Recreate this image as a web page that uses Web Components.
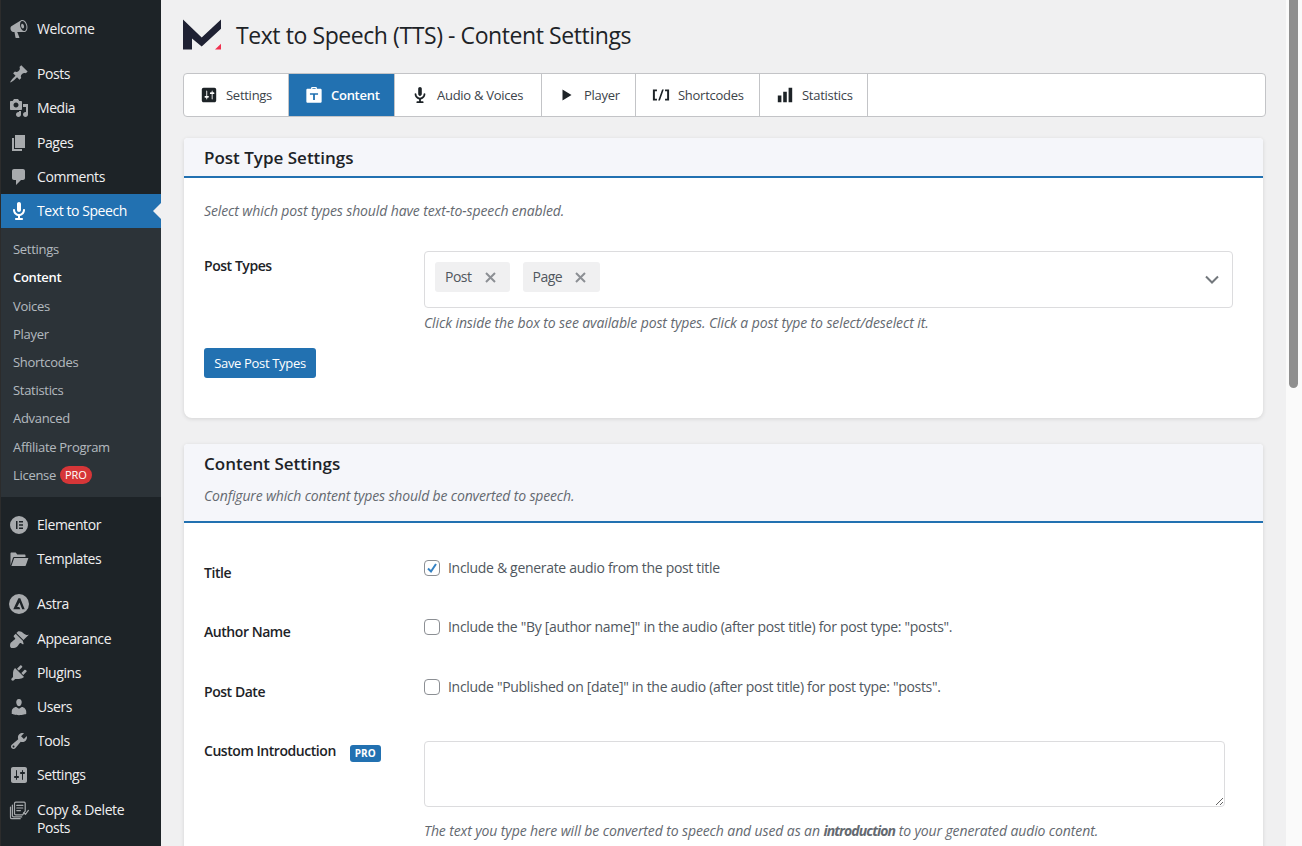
<!DOCTYPE html>
<html lang="en"><head><meta charset="utf-8"><title>Text to Speech</title>
<style>
html,body{margin:0;padding:0;height:846px;overflow:hidden;background:#f0f0f1}
body{font:13px/1.4 "Open Sans","Noto Sans",sans-serif;letter-spacing:-.3px;color:#3c434a}
</style></head><body>
<wp-app>
  <wp-sidebar slot="side">
    <wp-item icon="megaphone">Welcome</wp-item>
    <wp-sep></wp-sep>
    <wp-item icon="pin">Posts</wp-item>
    <wp-item icon="media">Media</wp-item>
    <wp-item icon="page">Pages</wp-item>
    <wp-item icon="comment">Comments</wp-item>
    <wp-item icon="mic" current>Text to Speech</wp-item>
    <wp-submenu>
      <wp-sub>Settings</wp-sub>
      <wp-sub current>Content</wp-sub>
      <wp-sub>Voices</wp-sub>
      <wp-sub>Player</wp-sub>
      <wp-sub>Shortcodes</wp-sub>
      <wp-sub>Statistics</wp-sub>
      <wp-sub>Advanced</wp-sub>
      <wp-sub>Affiliate Program</wp-sub>
      <wp-sub>License <red-pill>PRO</red-pill></wp-sub>
    </wp-submenu>
    <wp-sep></wp-sep>
    <wp-item icon="elementor">Elementor</wp-item>
    <wp-item icon="folder">Templates</wp-item>
    <wp-sep></wp-sep>
    <wp-item icon="astra">Astra</wp-item>
    <wp-item icon="brush">Appearance</wp-item>
    <wp-item icon="plug">Plugins</wp-item>
    <wp-item icon="users">Users</wp-item>
    <wp-item icon="tools">Tools</wp-item>
    <wp-item icon="sliders">Settings</wp-item>
    <wp-item icon="copy">Copy &amp; Delete Posts</wp-item>
  </wp-sidebar>

  <tts-head>Text to Speech (TTS) - Content Settings</tts-head>
  <tts-tabs>
    <tts-tab icon="sliders" w="105">Settings</tts-tab>
    <tts-tab icon="bag" w="106" active>Content</tts-tab>
    <tts-tab icon="mic" w="147">Audio &amp; Voices</tts-tab>
    <tts-tab icon="play" w="94">Player</tts-tab>
    <tts-tab icon="shortcode" w="124">Shortcodes</tts-tab>
    <tts-tab icon="bars" w="108">Statistics</tts-tab>
  </tts-tabs>

  <tts-card heading="Post Type Settings" style="height:280px;margin-top:21px">
    <tts-hint style="display:block;margin:24px 0 31px">Select which post types should have text-to-speech enabled.</tts-hint>
    <tts-row label="Post Types" labeltop="6" fieldtop="0">
      <tts-select><tts-chip>Post</tts-chip><tts-chip>Page</tts-chip></tts-select>
      <tts-hint style="display:block;margin-top:6px">Click inside the box to see available post types. Click a post type to select/deselect it.</tts-hint>
    </tts-row>
    <tts-button style="margin-top:16px">Save Post Types</tts-button>
  </tts-card>

  <tts-card heading="Content Settings" sub="Configure which content types should be converted to speech." style="margin-top:26px;height:500px">
    <tts-row label="Title" labeltop="41" fieldtop="36" h="59"><tts-check checked>Include &amp; generate audio from the post title</tts-check></tts-row>
    <tts-row label="Author Name" labeltop="41" fieldtop="36" h="60"><tts-check>Include the "By [author name]" in the audio (after post title) for post type: "posts".</tts-check></tts-row>
    <tts-row label="Post Date" labeltop="41" fieldtop="36" h="59.5"><tts-check>Include "Published on [date]" in the audio (after post title) for post type: "posts".</tts-check></tts-row>
    <tts-row label="Custom Introduction" pro labeltop="40" fieldtop="39">
      <tts-area></tts-area>
      <tts-hint style="display:block;margin-top:15px">The text you type here will be converted to speech and used as an <b style="letter-spacing:-.9px">introduction</b> to your generated audio content.</tts-hint>
    </tts-row>
  </tts-card>
</wp-app>

<script>
const ICONS={
megaphone:'<path d="M18.15 5.94c.46 1.62.38 3.22-.02 4.48-.42 1.28-1.26 2.18-2.3 2.48-.16.06-.26.06-.4.06-.06.02-.12.02-.18.02-.06.02-.14.02-.22.02H8.23l2.22 5.5c.02.14-.06.26-.14.34-.08.1-.24.16-.34.16H6.95c-.1 0-.26-.06-.34-.16-.08-.08-.16-.2-.14-.34l-1-5.5H4.25l-.02-.02c-.5.06-1.08-.18-1.54-.62s-.88-1.08-1.06-1.88c-.24-.8-.2-1.56-.02-2.2.18-.62.58-1.08 1.06-1.3l.02-.02 9-5.4c.1-.06.18-.1.24-.16.06-.04.14-.08.24-.12.16-.08.28-.12.5-.18 1.04-.3 2.24.1 3.22.98s1.76 2.24 2.22 3.86zm-2.58 5.98h-.02c.4-.1.74-.34 1.04-.7.58-.7.86-1.76.86-3.04 0-.64-.1-1.3-.28-1.98-.34-1.36-1.02-2.5-1.78-3.24s-1.68-1.1-2.46-.88c-.82.22-1.4.96-1.7 2-.32 1.04-.28 2.36.06 3.72.38 1.36 1 2.5 1.8 3.24.78.74 1.62 1.1 2.48.88zm-2.54-7.08c.22-.04.42-.02.62.04.38.16.76.48 1.02 1s.42 1.2.42 1.78c0 .3-.04.56-.12.8-.18.48-.44.84-.86.94-.34.1-.8-.06-1.14-.4s-.64-.86-.78-1.5c-.18-.62-.12-1.24.02-1.72s.48-.84.82-.94z"/>',
pin:'<path d="M10.44 3.02l1.82-1.82 6.36 6.35-1.83 1.82c-1.05-.68-2.48-.57-3.41.36l-.75.75c-.92.93-1.04 2.35-.35 3.41l-1.83 1.82-2.41-2.41-2.8 2.79c-.42.42-3.38 2.71-3.8 2.29s1.86-3.39 2.28-3.81l2.79-2.79L4.1 9.36l1.83-1.82c1.05.69 2.48.57 3.4-.36l.75-.75c.93-.92 1.05-2.35.36-3.41z"/>',
media:'<path d="M13 11V4c0-.55-.45-1-1-1h-1.67L9 1H5L3.67 3H2c-.55 0-1 .45-1 1v7c0 .55.45 1 1 1h10c.55 0 1-.45 1-1zM7 4.5c1.38 0 2.5 1.12 2.5 2.5S8.38 9.5 7 9.5 4.5 8.38 4.5 7 5.62 4.5 7 4.5zM14 6h5v10.5c0 1.38-1.12 2.5-2.5 2.5S14 17.88 14 16.5s1.12-2.5 2.5-2.5c.17 0 .34.02.5.05V9h-3V6zm-4 8.05V13h2v3.5c0 1.38-1.12 2.5-2.5 2.5S7 17.88 7 16.5 8.12 14 9.5 14c.17 0 .34.02.5.05z"/>',
page:'<path d="M6 15V2h10v13H6zm-1 1h8v2H3V5h2v11z"/>',
comment:'<path d="M5 2h9c1.1 0 2 .9 2 2v7c0 1.1-.9 2-2 2h-2l-5 5v-5H5c-1.1 0-2-.9-2-2V4c0-1.1.9-2 2-2z"/>',
mic:'<path d="M12 9V3c0-1.1-.89-2-2-2-1.12 0-2 .94-2 2v6c0 1.1.9 2 2 2 1.1 0 2-.9 2-2zm4 0c0 2.97-2.16 5.43-5 5.91V17h2c.56 0 1 .45 1 1s-.44 1-1 1H7c-.55 0-1-.45-1-1s.45-1 1-1h2v-2.09C6.17 14.43 4 11.97 4 9c0-.55.45-1 1-1 .56 0 1 .45 1 1 0 2.21 1.8 4 4 4 2.21 0 4-1.79 4-4 0-.55.45-1 1-1 .56 0 1 .45 1 1z"/>',
elementor:'<path fill-rule="evenodd" d="M10 1a9 9 0 1 0 0 18 9 9 0 0 0 0-18zM7 6h1.500v8H7V6zm3 0h4v1.500h-4V6zm0 3.250h4v1.500h-4v-1.500zm0 3.250h4V14h-4v-1.500z"/>',
folder:'<path d="M1.500 16.500V4.500c0-.6.4-1 1-1h4.200l1.600 2h7.200c.6 0 1 .4 1 1V8H5.200c-.6 0-1 .3-1.200.8L1.500 16.500z"/><path d="M5.200 9H19.400l-2.600 7.600c-.1.3-.4.4-.7.4H2.400L5.200 9z"/>',
astra:'<path fill-rule="evenodd" d="M10 0a10 10 0 1 0 0 20 10 10 0 0 0 0-20zM9.400 4.200h1.900l4.400 11h-2.500l-2.700-6.600-2.400 4.300h2.200l1 2.300H4.300L9.400 4.200z"/>',
brush:'<path d="M14.48 11.06L7.41 3.99l1.5-1.5c.5-.56 2.3-.47 3.51.32 1.21.8 1.43 1.28 2.91 2.1 1.18.64 2.45 1.26 4.45.85zm-.71.71L6.7 4.7 4.93 6.47c-.39.39-.39 1.02 0 1.41l1.06 1.06c.39.39.39 1.03 0 1.42-.6.6-1.43 1.11-2.21 1.69-.35.26-.7.53-1.01.84C1.43 13.23.91 15.24 1.1 17.2c.09.88.97 1.76 1.86 1.85 1.96.19 3.96-.33 5.29-1.66.31-.31.58-.66.84-1.01.58-.78 1.09-1.61 1.69-2.21.39-.39 1.03-.39 1.42 0L13.24 15c.39.39 1.02.39 1.41 0z"/>',
plug:'<path d="M13.11 4.36L9.87 7.6 8 5.73l3.24-3.24c.35-.34 1.05-.2 1.56.32.52.51.66 1.21.31 1.55zm-8 1.77l.91-1.12 9.01 9.01-1.19.84c-.71.71-2.63 1.16-3.82 1.16H6.14L4.9 17.26c-.59.59-1.54.59-2.12 0-.59-.58-.59-1.53 0-2.12l1.24-1.24v-3.88c0-1.13.4-3.19 1.09-3.89zm7.26 3.97l3.24-3.24c.34-.35 1.04-.21 1.55.31.52.51.66 1.21.31 1.55l-3.24 3.25z"/>',
users:'<path d="M10 9.25c-2.27 0-2.73-3.44-2.73-3.44C7 4.02 7.82 2 9.97 2c2.16 0 2.98 2.02 2.71 3.81 0 0-.41 3.44-2.68 3.44zm0 2.57L12.72 10c2.39 0 4.52 2.33 4.52 4.53v2.49s-3.65 1.13-7.24 1.13c-3.65 0-7.24-1.13-7.24-1.13v-2.49c0-2.25 1.94-4.48 4.47-4.48z"/>',
tools:'<path d="M16.68 9.77c-1.34 1.34-3.3 1.67-4.95.99l-5.41 6.52c-.99.99-2.59.99-3.58 0s-.99-2.59 0-3.57l6.52-5.42c-.68-1.65-.35-3.61.99-4.95 1.28-1.28 3.12-1.62 4.72-1.06l-2.89 2.89 2.82 2.82 2.86-2.87c.53 1.58.18 3.39-1.08 4.65zM3.81 16.21c.4.39 1.04.39 1.43 0 .4-.4.4-1.04 0-1.43-.39-.4-1.03-.4-1.43 0-.39.39-.39 1.03 0 1.43z"/>',
sliders:'<path d="M18 16V4c0-1.1-.9-2-2-2H4c-1.1 0-2 .9-2 2v12c0 1.1.9 2 2 2h12c1.1 0 2-.9 2-2zM8 11h1c.55 0 1 .45 1 1s-.45 1-1 1H8v1.5c0 .28-.22.5-.5.5s-.5-.22-.5-.5V13H6c-.55 0-1-.45-1-1s.45-1 1-1h1V5.5c0-.28.22-.5.5-.5s.5.22.5.5V11zm5-2h-1c-.55 0-1-.45-1-1s.45-1 1-1h1V5.5c0-.28.22-.5.5-.5s.5.22.5.5V7h1c.55 0 1 .45 1 1s-.45 1-1 1h-1v5.5c0 .28-.22.5-.5.5s-.5-.22-.5-.5V9z"/>',
copy:'<g fill="none" stroke="currentColor" stroke-width="1.2" stroke-linejoin="round" stroke-linecap="round"><path d="M5.5 3.5c0-.8.5-1.3 1.3-1.3h8.4c.6 0 1 .4 1 1v8l-2.6 3.7H6.8c-.8 0-1.3-.5-1.3-1.3z"/><path d="M3.4 5.2v10.4c0 .8.5 1.3 1.3 1.3h8"/><path d="M1.5 7v10.4c0 .8.5 1.3 1.3 1.3h8.4"/><path d="M7.8 5.4h6M7.8 8h6M7.8 10.6h3.6"/><path d="M14.6 12.8l1.8 1.6 3-4" /></g>',
bag:'<path fill-rule="evenodd" d="M6.800 3V2.200C6.800 1.500 7.300 1 8 1h4c.7 0 1.200.5 1.200 1.200V3h3.900c.8 0 1.400.6 1.400 1.400v12.700c0 .8-.6 1.400-1.400 1.400H2.900c-.8 0-1.400-.6-1.400-1.400V4.400C1.500 3.600 2.100 3 2.900 3h3.900zm1.400 0h3.600V2.200H8.200V3zM5.500 8v1.800h3.500v5.700h2V9.800h3.500V8h-9z"/>',
play:'<path d="M5 4l10 6-10 6z"/>',
shortcode:'<path d="M1 4h4.500v1.800H3.200v8.400h2.300V16H1zM19 4h-4.500v1.800h2.300v8.400h-2.300V16H19zM11.200 4h1.900L8.800 16H6.900z"/>',
bars:'<path d="M2 10.500h4V18H2zM8 6.500h4V18H8zM14 2h4v16h-4z"/>'
};
function def(tag,css,html,init){
  customElements.define(tag,class extends HTMLElement{
    constructor(){super();this.attachShadow({mode:'open'});}
    connectedCallback(){
      const h=typeof html==='function'?html(this):html;
      this.shadowRoot.innerHTML='<style>'+css+'</style>'+h;
      if(init)init(this);
    }
  });
}
const svg=(n,s)=>'<svg viewBox="0 0 20 20" width="'+s+'" height="'+s+'" fill="currentColor" aria-hidden="true">'+ICONS[n]+'</svg>';

def('wp-app',`
:host{display:flex;width:1302px;height:846px;overflow:hidden;background:#f0f0f1}
.main{flex:1;min-width:0;display:flex;flex-direction:column;padding:0 20px 0 22px;overflow:hidden}
.bar{flex:0 0 16px;background:#fafafa;padding-left:3px;box-sizing:border-box}
.thumb{width:9px;height:388px;background:#8f8f8f;border-radius:0 0 5px 5px}
`,`<slot name="side"></slot><div class="main"><slot></slot></div><div class="bar"><div class="thumb"></div></div>`);

def('wp-sidebar',`
:host{flex:0 0 160px;width:160px;height:846px;background:#1d2327;border-left:1px solid #2c2c2c;padding-top:12px;box-sizing:content-box;display:block;overflow:hidden;color:#f0f0f1}
`,`<slot></slot>`);
def('wp-sep',`:host{display:block;height:11px}`,``);
def('wp-item',`
:host{display:flex;position:relative;color:#f0f0f1;background:transparent;padding:8px 0;line-height:18.2px;font-size:14px;letter-spacing:-.42px}
:host([current]){background:#2271b1;color:#fff}
.ic{flex:0 0 36px;display:flex;justify-content:center;align-items:flex-start;color:#a7aaad;height:18px}
:host([current]) .ic{color:#fff}
.ic svg{display:block;margin-top:-1px}
.t{flex:1;padding-right:8px}
.arrow{position:absolute;right:0;top:50%;margin-top:-8px;border:8px solid transparent;border-right-color:#f0f0f1}
`,el=>`<span class="ic">${svg(el.getAttribute('icon'),20)}</span><span class="t"><slot></slot></span>`+(el.hasAttribute('current')?'<i class="arrow"></i>':''));
def('wp-submenu',`:host{display:block;background:#2c3338;padding:7px 0 8px}`,`<slot></slot>`);
def('wp-sub',`
:host{display:block;padding:5px 12px;line-height:18.2px;font-size:13px;color:rgba(240,246,252,.7)}
:host([current]){color:#fff;font-weight:600}
`,`<slot></slot>`);
def('red-pill',`
:host{display:inline-block;background:#d63638;color:#fff;font-size:11px;font-weight:400;line-height:17px;height:18px;padding:0 5px;border-radius:9px;margin-left:1px;vertical-align:1px;letter-spacing:-.15px}
`,`<slot></slot>`);

def('tts-head',`
:host{display:flex;align-items:center;gap:15px;height:31px;margin-top:18px;margin-bottom:24px;flex:none;color:#1d2327;font-size:23px;font-weight:400;letter-spacing:-.42px}
svg{display:block;flex:none}
h1{margin:0;font:inherit;line-height:31px;margin-top:3px}
`,`<svg width="38" height="31" viewBox="0 0 38 30" style="margin-top:2px"><path fill="#1f2133" d="M0 0L18.700 18 38 0v9.300L18.700 27 9 19V30H0z"/><path fill="#f0304f" d="M38 24.300V30h-6z"/></svg><h1><slot></slot></h1>`);

def('tts-tabs',`
:host{display:flex;flex:none;height:44px;box-sizing:border-box;background:#fff;border:1px solid #c3c4c7;border-radius:4px;overflow:hidden}
`,`<slot></slot>`);
def('tts-tab',`
:host{display:flex;align-items:center;gap:8px;box-sizing:border-box;padding-left:16px;border-right:1px solid #c3c4c7;color:#3c434a;font-size:13px;line-height:18px;letter-spacing:-.27px}
:host([active]){background:#2271b1;color:#fff;font-weight:600}
.ic{display:flex;color:#1d2327}
:host([active]) .ic{color:#fff}
svg{display:block}
`,el=>{el.style.flex='0 0 '+el.getAttribute('w')+'px';return `<span class="ic">${svg(el.getAttribute('icon'),18)}</span><span><slot></slot></span>`;});

def('tts-card',`
:host{display:block;flex:none;box-sizing:border-box;margin:0 3px 0 1px;background:#fff;border-radius:4px 4px 8px 8px;box-shadow:0 1px 4px rgba(0,0,0,.12)}
header{background:#f5f6fa;border-bottom:2px solid #2271b1;padding:8px 20px 0;box-sizing:border-box;border-radius:4px 4px 0 0}
h2{margin:0;font-size:17px;font-weight:600;line-height:23px;color:#1d2327;letter-spacing:0}
p{margin:0;font-style:italic;color:#646970;font-size:14px;letter-spacing:-.16px;line-height:18px}
.b{padding:0 20px}
`,el=>{const s=el.getAttribute('sub');return `<header style="height:${s?79:40}px"><h2>${el.getAttribute('heading')}</h2>${s?`<p style="margin-top:12px">${s}</p>`:''}</header><div class="b"><slot></slot></div>`;});
def('tts-hint',`:host{font-style:italic;color:#646970;font-size:14px;letter-spacing:-.11px;line-height:18px}`,`<slot></slot>`);
def('tts-row',`
:host{display:grid;grid-template-columns:220px 1fr;align-items:start}
.l{display:flex;align-items:flex-start;font-weight:600;color:#1d2327;font-size:14px;letter-spacing:-.45px;line-height:18px}
.p{display:inline-block;background:#2271b1;color:#fff;font-size:10px;font-weight:700;line-height:17px;height:17px;padding:0 5px;border-radius:3px;margin:3px 0 0 14px;letter-spacing:0}
`,el=>{
  const h=el.getAttribute('h');if(h)el.style.height=h+'px';
  const pro=el.hasAttribute('pro')?'<span class="p">PRO</span>':'';
  return `<div class="l" style="padding-top:${el.getAttribute('labeltop')}px"><span>${el.getAttribute('label')}</span>${pro}</div><div style="padding-top:${el.getAttribute('fieldtop')}px"><slot></slot></div>`;
});
def('tts-select',`
:host{display:flex;align-items:flex-start;gap:13px;height:57px;width:809px;box-sizing:border-box;border:1px solid #dcdcde;border-radius:4px;padding:10px 10px 0;position:relative}
svg{position:absolute;right:12px;top:23px}
`,`<slot></slot><svg width="16" height="10" viewBox="0 0 16 10" fill="none" stroke="#72777c" stroke-width="2"><path d="M2 1.500l6 6 6-6"/></svg>`);
def('tts-chip',`
:host{display:inline-flex;align-items:center;height:30px;box-sizing:border-box;padding:0 14px 0 10px;background:#f0f0f1;border-radius:3px;color:#50575e;font-size:14px;letter-spacing:-.5px}
svg{margin-left:13px;display:block}
`,`<slot></slot><svg width="11" height="11" viewBox="0 0 11 11" stroke="#8c8f94" stroke-width="2" fill="none"><path d="M1 1l9 9M10 1l-9 9"/></svg>`);
def('tts-button',`
:host{display:inline-flex;align-items:center;justify-content:center;width:112px;height:30px;background:#2271b1;color:#fff;border-radius:3px;font-size:13px;letter-spacing:-.33px}
`,`<slot></slot>`);
def('tts-check',`
:host{display:flex;align-items:center;gap:8px;color:#50575e;font-size:14px;letter-spacing:-.31px;line-height:18px}
.c{flex:none;width:16px;height:16px;box-sizing:border-box;border:1px solid #8c8f94;border-radius:4px;background:#fff;display:flex;align-items:center;justify-content:center}
`,el=>`<span class="c">${el.hasAttribute('checked')?'<svg width="12" height="12" viewBox="0 0 12 12" fill="none" stroke="#3582c4" stroke-width="2"><path d="M2 6.500l3 3 5-7.500"/></svg>':''}</span><span><slot></slot></span>`);
def('tts-area',`
:host{display:block}
textarea{display:block;width:801px;height:66px;box-sizing:border-box;border:1px solid #dcdcde;border-radius:4px;background:#fff;margin:0;padding:4px 8px}
`,`<textarea aria-label="Custom Introduction"></textarea>`);
</script>
</body></html>
